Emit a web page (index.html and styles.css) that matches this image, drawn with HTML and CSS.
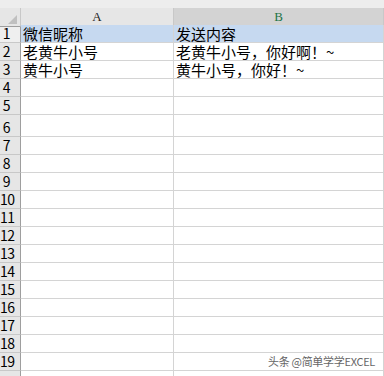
FILE: index.html
```html
<!DOCTYPE html>
<html lang="zh-CN">
<head>
    <meta charset="UTF-8">
    <title>微信昵称</title>
    <link rel="stylesheet" href="styles.css">
</head>
<body>
    <div class="sheet">
        <div class="topbar"></div>

        <div class="row head">
            <div class="corner"><span class="tri"></span></div>
            <div class="col-head">A</div>
            <div class="col-head active">B</div>
        </div>

        <div class="row sel">
            <div class="num">1</div>
            <div class="cell">微信昵称</div>
            <div class="cell">发送内容</div>
        </div>
        <div class="row">
            <div class="num">2</div>
            <div class="cell">老黄牛小号</div>
            <div class="cell">老黄牛小号，你好啊！~</div>
        </div>
        <div class="row">
            <div class="num">3</div>
            <div class="cell">黄牛小号</div>
            <div class="cell">黄牛小号，你好！~</div>
        </div>
        <div class="row"><div class="num">4</div><div class="cell"></div><div class="cell"></div></div>
        <div class="row"><div class="num">5</div><div class="cell"></div><div class="cell"></div></div>
        <div class="row tall"><div class="num">6</div><div class="cell"></div><div class="cell"></div></div>
        <div class="row"><div class="num">7</div><div class="cell"></div><div class="cell"></div></div>
        <div class="row"><div class="num">8</div><div class="cell"></div><div class="cell"></div></div>
        <div class="row"><div class="num">9</div><div class="cell"></div><div class="cell"></div></div>
        <div class="row"><div class="num">10</div><div class="cell"></div><div class="cell"></div></div>
        <div class="row"><div class="num">11</div><div class="cell"></div><div class="cell"></div></div>
        <div class="row"><div class="num">12</div><div class="cell"></div><div class="cell"></div></div>
        <div class="row"><div class="num">13</div><div class="cell"></div><div class="cell"></div></div>
        <div class="row"><div class="num">14</div><div class="cell"></div><div class="cell"></div></div>
        <div class="row"><div class="num">15</div><div class="cell"></div><div class="cell"></div></div>
        <div class="row"><div class="num">16</div><div class="cell"></div><div class="cell"></div></div>
        <div class="row"><div class="num">17</div><div class="cell"></div><div class="cell"></div></div>
        <div class="row"><div class="num">18</div><div class="cell"></div><div class="cell"></div></div>
        <div class="row"><div class="num">19</div><div class="cell"></div><div class="cell"></div></div>
        <div class="row"><div class="num"></div><div class="cell"></div><div class="cell"></div></div>

        <div class="mark">头条 @简单学学EXCEL</div>
    </div>
</body>
</html>
```

FILE: styles.css
```css
body {
    margin: 0;
    background: #fff;
    overflow: hidden;
}

.sheet {
    position: relative;
    width: 384px;
    height: 376px;
    overflow: hidden;
    font-family: 'Noto Sans CJK SC', sans-serif;
    color: #000;
}

.topbar {
    height: 8px;
    background: #ededed;
}

.row {
    display: grid;
    grid-template-columns: 21px 153px 1fr;
    height: 18px;
}

.row.tall {
    height: 22px;
}

.num {
    box-sizing: border-box;
    border-right: 1px solid #9e9e9e;
    border-bottom: 1px solid #c8c8c8;
    background: #e6e6e6;
    padding-right: 7px;
    text-align: center;
    font-size: 14px;
    line-height: 17px;
    letter-spacing: -0.5px;
    white-space: nowrap;
}

.tall .num {
    padding-top: 4px;
}

.cell {
    box-sizing: border-box;
    border-right: 1px solid #d4d4d4;
    border-bottom: 1px solid #d4d4d4;
    padding-left: 2px;
    font-size: 15px;
    line-height: 17px;
    white-space: nowrap;
}

.sel .num {
    background: #efefef;
}

.sel .cell {
    background: #c6d9f0;
}

/* column header strip */
.head {
    height: 17px;
}

.corner {
    position: relative;
    box-sizing: border-box;
    border-right: 1px solid #c8c8c8;
    border-bottom: 1px solid #9e9e9e;
    background: #e6e6e6;
}

.tri {
    position: absolute;
    right: 3px;
    bottom: 2px;
    width: 0;
    height: 0;
    border-left: 9px solid transparent;
    border-bottom: 9px solid #c0c0c0;
}

.col-head {
    box-sizing: border-box;
    border-right: 1px solid #c8c8c8;
    border-bottom: 1px solid #9e9e9e;
    background: #e6e6e6;
    text-align: center;
    font-family: 'Liberation Serif', serif;
    font-size: 13px;
    line-height: 17px;
    color: #222;
}

.col-head.active {
    background: #d3d3d3;
    border-bottom: 2px solid #217346;
    color: #217346;
}

.mark {
    position: absolute;
    right: 9px;
    bottom: 8px;
    font-size: 11px;
    line-height: 13px;
    color: #666;
    letter-spacing: -0.3px;
}
```
